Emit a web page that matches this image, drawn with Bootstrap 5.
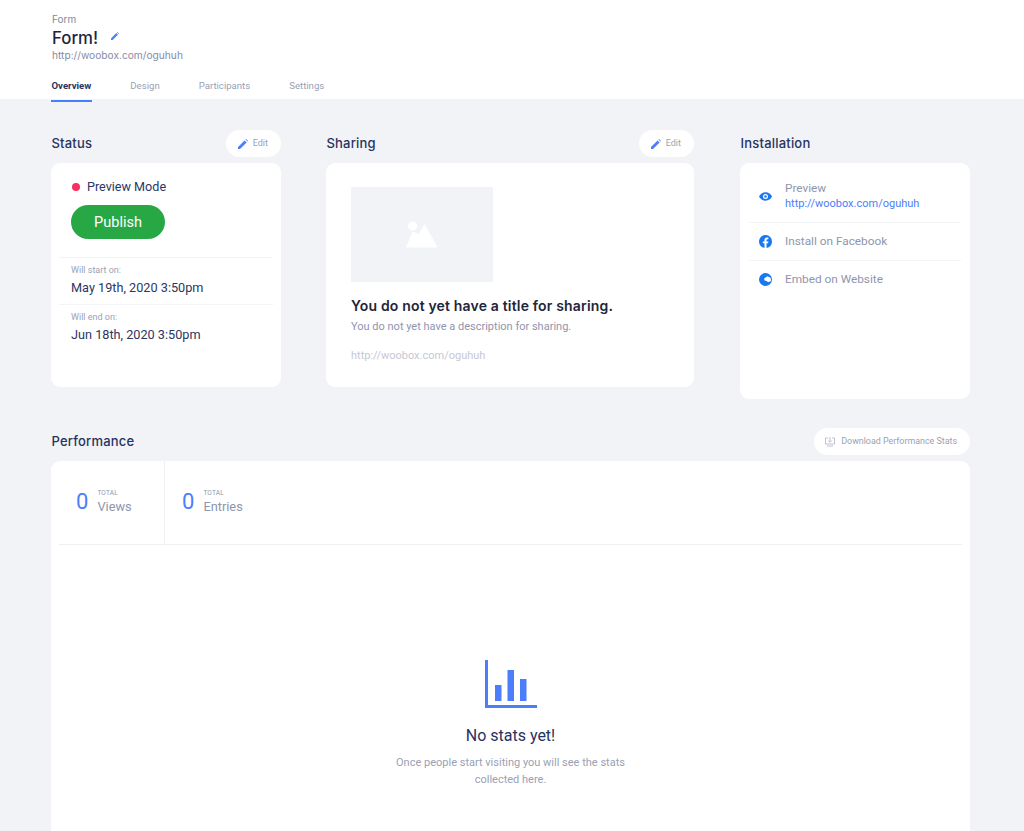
<!DOCTYPE html>
<html lang="en">
<head>
<meta charset="utf-8">
<title>Form!</title>
<link href="https://cdn.jsdelivr.net/npm/bootstrap@5.3.0/dist/css/bootstrap.min.css" rel="stylesheet">
<style>
html,body{height:831px;overflow:hidden}
body{background:#f2f3f7;font-family:Roboto,"Liberation Sans",sans-serif;color:#2b3663}
.head-wrap{background:#fff;height:99px;padding:13px 51px 0;position:relative}
.crumb{font-size:10px;line-height:13px;color:#7f869f;font-family:Inter,sans-serif;padding-left:1px}
.form-title{font-family:Inter,sans-serif;font-weight:500;font-size:16.8px;line-height:22px;color:#1d2440;margin:1px 0 0;padding-left:1px}
.title-pen{margin-bottom:4px}
.form-url{font-family:Inter,sans-serif;font-size:10.2px;line-height:15px;color:#858ba6;margin-top:-1px;padding-left:1px}
.tabrow{gap:38px;margin-top:16px}
.tabrow a{font-size:9.6px;line-height:13px;color:#9a9fb5;text-decoration:none;padding:0 .5px 8px;border-bottom:2px solid transparent;display:block}
.tabrow a.on{color:#27325f;font-weight:700;border-bottom-color:#4c7dfc}
.body-wrap{padding:31px 54px 0 51px}
.top-cols{gap:45px;align-items:flex-start}
.c-status{width:230px;flex:none}
.c-share{width:368px;flex:none;margin-right:1px}
.c-install{width:230px;flex:none}
.sec-head{height:27px;margin-bottom:6px}
.sec-title{font-family:Inter,sans-serif;font-weight:500;font-size:13px;color:#27325f;margin:0;line-height:27px;letter-spacing:.2px;padding-left:.5px}
.pill-btn{background:#fff;border-radius:14px;height:27px;padding:1px 13px 0 12px;font-size:9px;color:#9a9fb5;display:flex;align-items:center;gap:5px;border:0}
.panel{background:#fff;border-radius:9px}
.p-status{height:224px;padding:16px 0 0}
.dot{width:8px;height:8px;border-radius:50%;background:#f6305f;display:block}
.mode{font-size:12.6px;line-height:15px;padding-left:21px;gap:7px;color:#2b3663}
.pub{background:#28a745;color:#fff;border:0;border-radius:17px;width:94px;height:34px;font-size:14.5px;margin:11px 0 0 20px;display:block;padding:1px 0 0}
.date-block{border-top:1px solid #f3f4f7;margin:0 8px;padding:6px 12px 0;height:47px}
.date-block.first{margin-top:18px}
.lbl{font-size:9px;line-height:12px;color:#9a9fb5}
.dval{font-size:12.7px;line-height:17px;margin-top:3px;color:#2b3663}
.p-share{height:224px;padding:24px 25px}
.img-ph{width:142px;height:95px;background:#f2f3f7}
.share-t{font-family:Inter,sans-serif;font-weight:600;font-size:14px;line-height:20px;color:#22263a;margin:14px 0 0;letter-spacing:.17px}
.share-d{font-size:11px;line-height:14px;color:#8f95ae;margin-top:4px}
.share-u{font-size:11px;line-height:14px;color:#c5c8d3;margin-top:15px}
.p-install{height:236px;padding:10px 9px 0}
.inst-row{border-bottom:1px solid #f3f4f7;padding:0 0 1px 10px;gap:13px;font-size:11.8px;line-height:16px;color:#8f95ae;height:38px}
.inst-row.tall{height:50px;padding-bottom:3px}
.inst-row.last{border-bottom:0;padding-bottom:2px}
.inst-row a{color:#4c7dfc;text-decoration:none;display:block;font-size:11px}
.perf{margin-top:29px}
.perf .sec-head{margin-bottom:6px}
.dl-btn{font-size:8.9px;gap:6px;padding:1px 13px 0 11px}
.p-perf{height:420px;padding:0 8px}
.stats-row{height:84px;border-bottom:1px solid #eff0f4}
.stat{padding:0 0 0 17px;gap:9px;align-items:center;height:84px}
.stat.first{width:106px;border-right:1px solid #eff0f4;padding-bottom:3px}
.stat.second{padding-left:17px;padding-bottom:3px}
.num{font-size:22px;line-height:26px;color:#4c7dfc}
.tot{font-size:6.5px;line-height:9px;color:#8f95ae;letter-spacing:.2px}
.sname{font-size:12.8px;line-height:15px;color:#8f95ae;margin-top:1px}
.empty{padding-top:115px;text-align:center}
.empty-t{font-size:16px;line-height:20px;color:#27325f;margin:18px 0 0;font-weight:400}
.empty-d{font-size:11px;line-height:17px;color:#9a9fb5;margin-top:8px}
</style>
</head>
<body>
<header class="head-wrap">
  <div class="crumb">Form</div>
  <div class="d-flex align-items-center" style="gap:13px">
    <h1 class="form-title">Form!</h1>
    <svg class="title-pen" width="8" height="8" viewBox="0 0 10 10"><path d="M0 10V8L6.6 1.4 8.6 3.4 2 10Z M7.4.6 8 0 10 2 9.4 2.6Z" fill="#4c7dfc"/></svg>
  </div>
  <div class="form-url">http://woobox.com/oguhuh</div>
  <nav class="d-flex tabrow">
    <a class="on" href="#">Overview</a><a href="#">Design</a><a href="#">Participants</a><a href="#">Settings</a>
  </nav>
</header>
<main class="body-wrap">
  <div class="d-flex top-cols">
    <section class="c-status">
      <div class="d-flex justify-content-between align-items-center sec-head">
        <h2 class="sec-title">Status</h2>
        <button class="pill-btn"><svg width="10" height="10" viewBox="0 0 10 10"><path d="M0 10V8L6.6 1.4 8.6 3.4 2 10Z M7.4.6 8 0 10 2 9.4 2.6Z" fill="#4c7dfc"/></svg>Edit</button>
      </div>
      <div class="panel p-status">
        <div class="d-flex align-items-center mode"><span class="dot"></span>Preview Mode</div>
        <button class="pub">Publish</button>
        <div class="date-block first"><div class="lbl">Will start on:</div><div class="dval">May 19th, 2020 3:50pm</div></div>
        <div class="date-block"><div class="lbl">Will end on:</div><div class="dval">Jun 18th, 2020 3:50pm</div></div>
      </div>
    </section>
    <section class="c-share">
      <div class="d-flex justify-content-between align-items-center sec-head">
        <h2 class="sec-title">Sharing</h2>
        <button class="pill-btn"><svg width="10" height="10" viewBox="0 0 10 10"><path d="M0 10V8L6.6 1.4 8.6 3.4 2 10Z M7.4.6 8 0 10 2 9.4 2.6Z" fill="#4c7dfc"/></svg>Edit</button>
      </div>
      <div class="panel p-share">
        <div class="img-ph d-flex align-items-center justify-content-center">
          <svg width="32" height="27" viewBox="0 0 32 27"><circle cx="6.600" cy="5" r="4.600" fill="#fff"/><path d="M.5 26 7 10.800 12.600 14 18.600 3.800 31 26Z" fill="#fff" stroke="#fff" stroke-linejoin="round"/></svg>
        </div>
        <div class="share-t">You do not yet have a title for sharing.</div>
        <div class="share-d">You do not yet have a description for sharing.</div>
        <div class="share-u">http://woobox.com/oguhuh</div>
      </div>
    </section>
    <section class="c-install">
      <div class="d-flex align-items-center sec-head"><h2 class="sec-title">Installation</h2></div>
      <div class="panel p-install">
        <div class="d-flex align-items-center inst-row tall">
          <svg width="13" height="13" viewBox="0 0 14 14"><path fill-rule="evenodd" d="M7 2.500C3.800 2.500 1.200 4.500 0 7c1.200 2.500 3.800 4.500 7 4.500s5.800-2 7-4.500C12.800 4.500 10.200 2.500 7 2.500ZM7 4.300a2.700 2.700 0 1 1 0 5.400 2.700 2.700 0 0 1 0-5.400ZM7 5.600a1.400 1.400 0 1 0 0 2.800 1.400 1.400 0 0 0 0-2.800Z" fill="#1877f2"/></svg>
          <div>Preview<a href="#">http://woobox.com/oguhuh</a></div>
        </div>
        <div class="d-flex align-items-center inst-row">
          <svg width="13" height="13" viewBox="0 0 14 14"><path d="M14 7a7 7 0 1 0-8.100 6.900V9H4.100V7h1.800V5.500c0-1.800 1-2.700 2.700-2.700.8 0 1.500.1 1.500.1v1.700h-.9c-.9 0-1.100.5-1.100 1.100V7h2l-.3 2H8.100v4.900A7 7 0 0 0 14 7Z" fill="#1877f2"/></svg>
          <div>Install on Facebook</div>
        </div>
        <div class="d-flex align-items-center inst-row last">
          <svg width="13" height="13" viewBox="0 0 14 14"><path fill-rule="evenodd" d="M7 0a7 7 0 1 1 0 14A7 7 0 0 1 7 0ZM5.500 6 9 3.500 12.500 5 13 8.500 10 10 8 8.500 6 8Z" fill="#1877f2"/></svg>
          <div>Embed on Website</div>
        </div>
      </div>
    </section>
  </div>
  <section class="perf">
    <div class="d-flex justify-content-between align-items-center sec-head">
      <h2 class="sec-title">Performance</h2>
      <button class="pill-btn dl-btn"><svg width="10" height="10" viewBox="0 0 10 10" fill="none" stroke="#aeb2c4" stroke-width=".8"><path d="M3 1H.5v6h9V1H7M5 0v5M3.300 3.500 5 5.200l1.700-1.700M2 9h6"/></svg>Download Performance Stats</button>
    </div>
    <div class="panel p-perf">
      <div class="d-flex stats-row">
        <div class="d-flex stat first"><div class="num">0</div><div><div class="tot">TOTAL</div><div class="sname">Views</div></div></div>
        <div class="d-flex stat second"><div class="num">0</div><div><div class="tot">TOTAL</div><div class="sname">Entries</div></div></div>
      </div>
      <div class="empty">
        <svg width="52" height="48" viewBox="0 0 52 48" fill="#4c7dfc"><path d="M0 0h3v45h49v3H0Z"/><rect x="10" y="25" width="6.500" height="16"/><rect x="22.500" y="10" width="6.500" height="31"/><rect x="35" y="19" width="6.500" height="22"/></svg>
        <h3 class="empty-t">No stats yet!</h3>
        <div class="empty-d">Once people start visiting you will see the stats<br>collected here.</div>
      </div>
    </div>
  </section>
</main>
<script src="https://cdn.jsdelivr.net/npm/bootstrap@5.3.0/dist/js/bootstrap.bundle.min.js"></script>
</body>
</html>
